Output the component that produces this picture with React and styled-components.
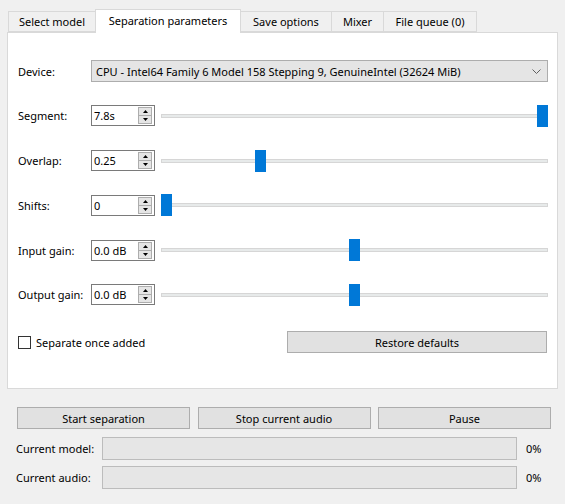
import React from "react";
import styled, { createGlobalStyle } from "styled-components";

const GlobalStyle = createGlobalStyle`
  html, body {
    margin: 0;
    padding: 0;
    background: #f0f0f0;
  }
  body {
    font-family: "Noto Sans", "Segoe UI", sans-serif;
    font-size: 11px;
    color: #000;
  }
`;

const tabs = [
  { label: "Select model", w: 88 },
  { label: "Separation parameters", w: 146, active: true },
  { label: "Save options", w: 92 },
  { label: "Mixer", w: 53 },
  { label: "File queue (0)", w: 94 },
];

const params = [
  { label: "Segment:", value: "7.8s", pos: 1 },
  { label: "Overlap:", value: "0.25", pos: 0.25 },
  { label: "Shifts:", value: "0", pos: 0 },
  { label: "Input gain:", value: "0.0 dB", pos: 0.5 },
  { label: "Output gain:", value: "0.0 dB", pos: 0.5 },
];

export default function App() {
  return (
    <>
      <GlobalStyle />
      <Window>
        <TabBar>
          {tabs.map((t) => (
            <Tab key={t.label} $active={t.active} $w={t.w}>
              {t.label}
            </Tab>
          ))}
        </TabBar>
        <Panel>
          <Form>
            <Row>
              <Label>Device:</Label>
              <Combo>
                <span>CPU - Intel64 Family 6 Model 158 Stepping 9, GenuineIntel (32624 MiB)</span>
                <svg width="9" height="5" viewBox="0 0 9 5">
                  <polyline points="0.5,0.5 4.5,4.5 8.5,0.5" fill="none" stroke="#606060" strokeWidth="1" />
                </svg>
              </Combo>
            </Row>
            {params.map((p) => (
              <Row key={p.label}>
                <Label>{p.label}</Label>
                <Spin>
                  <SpinText>{p.value}</SpinText>
                  <Arrows>
                    <ArrowBtn>
                      <svg width="5" height="3" viewBox="0 0 5 3">
                        <polygon points="2.5,0 5,3 0,3" fill="#000" />
                      </svg>
                    </ArrowBtn>
                    <ArrowBtn>
                      <svg width="5" height="3" viewBox="0 0 5 3">
                        <polygon points="0,0 5,0 2.5,3" fill="#000" />
                      </svg>
                    </ArrowBtn>
                  </Arrows>
                </Spin>
                <Slider>
                  <Track />
                  <Thumb style={{ left: `calc((100% - 11px) * ${p.pos})` }} />
                </Slider>
              </Row>
            ))}
            <OptionRow>
              <Check>
                <Box />
                Separate once added
              </Check>
              <Button $w={260}>Restore defaults</Button>
            </OptionRow>
          </Form>
        </Panel>
        <Actions>
          <Button $w={173}>Start separation</Button>
          <Button $w={173}>Stop current audio</Button>
          <Button $w={173}>Pause</Button>
        </Actions>
        <Progress>
          <ProgressRow>
            <ProgressLabel>Current model:</ProgressLabel>
            <Bar />
            <span>0%</span>
          </ProgressRow>
          <ProgressRow>
            <ProgressLabel>Current audio:</ProgressLabel>
            <Bar />
            <span>0%</span>
          </ProgressRow>
        </Progress>
      </Window>
    </>
  );
}

const Window = styled.div`
  width: 565px;
  height: 504px;
  box-sizing: border-box;
  padding: 9px 7px 0 7px;
  display: flex;
  flex-direction: column;
`;

const TabBar = styled.div`
  display: flex;
  align-items: flex-end;
  height: 23px;
  padding-left: 2px;
  position: relative;
  z-index: 1;
`;

const Tab = styled.div`
  box-sizing: border-box;
  width: ${(p) => p.$w}px;
  height: ${(p) => (p.$active ? "24px" : "21px")};
  margin-bottom: ${(p) => (p.$active ? "-1px" : "0")};
  margin-left: -1px;
  border: 1px solid #d9d9d9;
  border-bottom: ${(p) => (p.$active ? "none" : "1px solid #d9d9d9")};
  background: ${(p) => (p.$active ? "#fff" : "#f0f0f0")};
  display: flex;
  align-items: center;
  justify-content: center;
  padding-bottom: ${(p) => (p.$active ? "2px" : "0")};
  white-space: nowrap;
  position: relative;
  z-index: ${(p) => (p.$active ? 2 : 1)};
`;

const Panel = styled.div`
  box-sizing: border-box;
  height: 357px;
  border: 1px solid #d9d9d9;
  background: #fff;
  padding: 27px 9px 0 10px;
`;

const Form = styled.div`
  display: flex;
  flex-direction: column;
  gap: 22.75px;
`;

const Row = styled.div`
  display: flex;
  align-items: center;
  height: 22px;
`;

const Label = styled.div`
  width: 73px;
  flex: none;
  white-space: nowrap;
`;

const Combo = styled.div`
  flex: 1;
  box-sizing: border-box;
  height: 22px;
  border: 1px solid #adadad;
  background: #e5e5e5;
  display: flex;
  align-items: center;
  justify-content: space-between;
  padding: 0 6px 0 4px;
  white-space: nowrap;
  svg {
    flex: none;
  }
`;

const Spin = styled.div`
  box-sizing: border-box;
  width: 64px;
  height: 21px;
  flex: none;
  border: 1px solid #7a7a7a;
  background: #fff;
  display: flex;
  align-items: center;
  padding: 1px 2px 1px 2px;
`;

const SpinText = styled.div`
  flex: 1;
  white-space: nowrap;
`;

const Arrows = styled.div`
  display: flex;
  flex-direction: column;
  width: 14px;
  height: 17px;
`;

const ArrowBtn = styled.div`
  flex: 1;
  box-sizing: border-box;
  border: 1px solid #adadad;
  background: #e5e5e5;
  display: flex;
  align-items: center;
  justify-content: center;
  & + & {
    border-top: none;
  }
`;

const Slider = styled.div`
  flex: 1;
  margin-left: 6px;
  height: 22px;
  position: relative;
  display: flex;
  align-items: center;
`;

const Track = styled.div`
  width: 100%;
  height: 4px;
  box-sizing: border-box;
  border: 1px solid #d6d6d6;
  background: #e7eaea;
`;

const Thumb = styled.div`
  position: absolute;
  top: 0;
  width: 11px;
  height: 22px;
  background: #0078d7;
`;

const OptionRow = styled.div`
  display: flex;
  align-items: center;
  justify-content: space-between;
  height: 22px;
  margin-top: 2.5px;
  padding-right: 1px;
`;

const Check = styled.label`
  display: flex;
  align-items: center;
  gap: 5px;
`;

const Box = styled.span`
  box-sizing: border-box;
  width: 13px;
  height: 13px;
  border: 1px solid #333;
  background: #fff;
`;

const Button = styled.div`
  box-sizing: border-box;
  width: ${(p) => p.$w}px;
  height: 22px;
  border: 1px solid #adadad;
  background: #e1e1e1;
  display: flex;
  align-items: center;
  justify-content: center;
  white-space: nowrap;
`;

const Actions = styled.div`
  display: flex;
  gap: 7.5px;
  margin-top: 18px;
  padding-left: 10px;
`;

const Progress = styled.div`
  display: flex;
  flex-direction: column;
  gap: 6px;
  margin-top: 8px;
  padding-left: 9px;
`;

const ProgressRow = styled.div`
  display: flex;
  align-items: center;
  gap: 9px;
`;

const ProgressLabel = styled.div`
  width: 86px;
  margin-right: -9px;
  white-space: nowrap;
`;

const Bar = styled.div`
  box-sizing: border-box;
  width: 415px;
  height: 23px;
  border: 1px solid #bcbcbc;
  background: #e6e6e6;
`;
